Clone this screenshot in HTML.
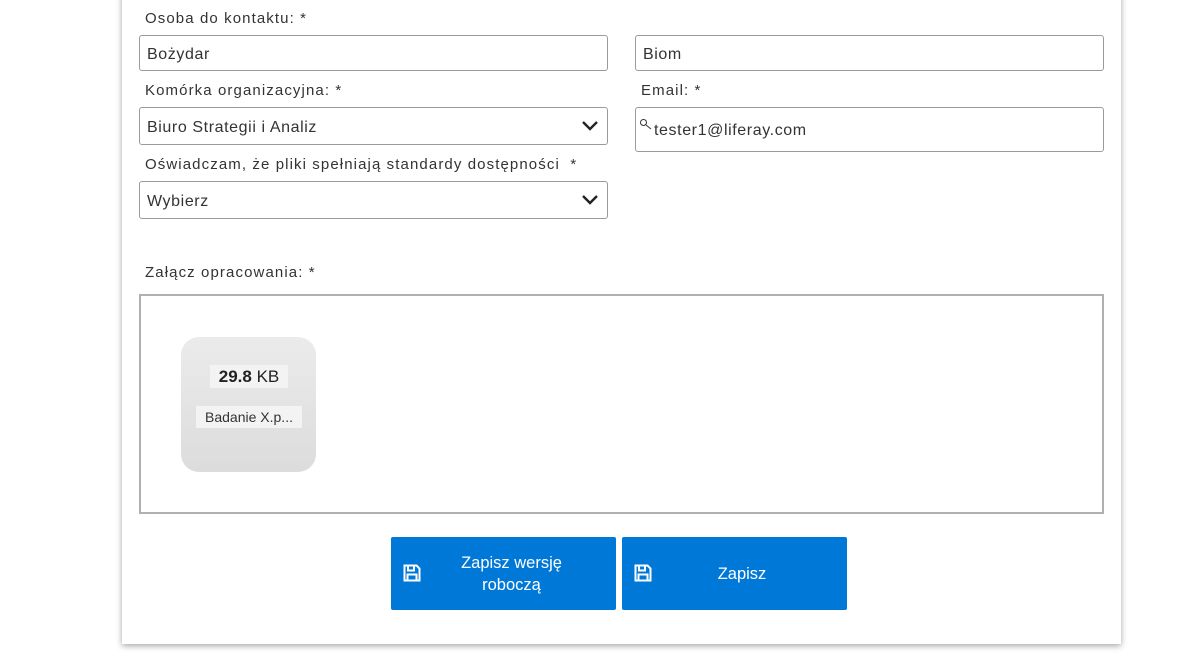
<!DOCTYPE html>
<html><head><meta charset="utf-8"><style>
html,body{margin:0;padding:0;background:#fff;width:1201px;height:663px;overflow:hidden;font-family:"Liberation Sans",sans-serif;}
.panel{position:absolute;left:122px;top:-10px;width:999px;height:654px;background:#fff;box-shadow:0 2px 6px rgba(0,0,0,.35);}
.a{position:absolute;}
.lbl{font-size:15px;color:#333;letter-spacing:1.1px;}
.inp{border:1px solid #9a9a9a;border-radius:3px;box-sizing:border-box;font-size:16px;color:#333;padding-left:7px;padding-top:3px;display:flex;align-items:center;letter-spacing:.6px;}
.chev{position:absolute;right:8px;top:50%;margin-top:-7px;}
.btn{background:#0078d7;border-radius:2px;color:#fff;font-size:16.5px;text-align:center;display:flex;align-items:center;justify-content:center;line-height:22px;}
</style></head><body>
<div class="panel"></div>
<div class="a lbl" style="left:145px;top:10px">Osoba do kontaktu: *</div>
<div class="a inp" style="left:139px;top:35px;width:469px;height:36px">Bożydar</div>
<div class="a inp" style="left:635px;top:35px;width:469px;height:36px">Biom</div>
<div class="a lbl" style="left:145px;top:82px">Komórka organizacyjna: *</div>
<div class="a lbl" style="left:641px;top:82px">Email: *</div>
<div class="a inp" style="left:139px;top:107px;width:469px;height:38px">Biuro Strategii i Analiz<svg class="chev" width="18" height="14" viewBox="0 0 18 14"><path d="M2 3l7 7 7-7" fill="none" stroke="#222" stroke-width="2.4"/></svg></div>
<div class="a inp" style="left:635px;top:107px;width:469px;height:45px;padding-left:18px">tester1@liferay.com<svg style="position:absolute;left:3px;top:10px" width="14" height="12" viewBox="0 0 14 12"><circle cx="4.5" cy="4.5" r="3" fill="none" stroke="#333" stroke-width="1"/><path d="M7 7l5 4" stroke="#333" stroke-width="1"/></svg></div>
<div class="a lbl" style="left:145px;top:156px">Oświadczam, że pliki spełniają standardy dostępności &nbsp;*</div>
<div class="a inp" style="left:139px;top:181px;width:469px;height:38px">Wybierz<svg class="chev" width="18" height="14" viewBox="0 0 18 14"><path d="M2 3l7 7 7-7" fill="none" stroke="#222" stroke-width="2.4"/></svg></div>
<div class="a lbl" style="left:145px;top:264px">Załącz opracowania: *</div>
<div class="a" style="left:139px;top:294px;width:965px;height:220px;border:2px solid #b0b0b0;box-sizing:border-box"></div>
<div class="a" style="left:181px;top:337px;width:135px;height:135px;border-radius:18px;background:linear-gradient(#ebebeb,#dcdcdc)"></div>
<div class="a" style="left:210px;top:365px;width:78px;height:23px;background:#f3f3f3;font-size:17px;color:#222;text-align:center;line-height:23px"><b>29.8</b> KB</div>
<div class="a" style="left:196px;top:406px;width:106px;height:22px;background:#f3f3f3;font-size:14px;color:#333;text-align:center;line-height:22px">Badanie X.p...</div>
<div class="a btn" style="left:391px;top:537px;width:225px;height:73px"><div style="width:140px;margin-left:16px">Zapisz wersję robocz&#261;</div></div>
<div class="a btn" style="left:622px;top:537px;width:225px;height:73px"><div style="margin-left:15px">Zapisz</div></div>
<svg class="a" style="left:403px;top:564px" width="18" height="18" viewBox="0 0 18 18"><path d="M1.5 1.5h12l3 3v12h-15z" fill="none" stroke="#fff" stroke-width="2"/><path d="M5 1.5v5h6v-5" fill="none" stroke="#fff" stroke-width="2"/><path d="M4.5 16.5v-6h9v6" fill="none" stroke="#fff" stroke-width="2"/></svg>
<svg class="a" style="left:634px;top:564px" width="18" height="18" viewBox="0 0 18 18"><path d="M1.5 1.5h12l3 3v12h-15z" fill="none" stroke="#fff" stroke-width="2"/><path d="M5 1.5v5h6v-5" fill="none" stroke="#fff" stroke-width="2"/><path d="M4.5 16.5v-6h9v6" fill="none" stroke="#fff" stroke-width="2"/></svg>
</body></html>
